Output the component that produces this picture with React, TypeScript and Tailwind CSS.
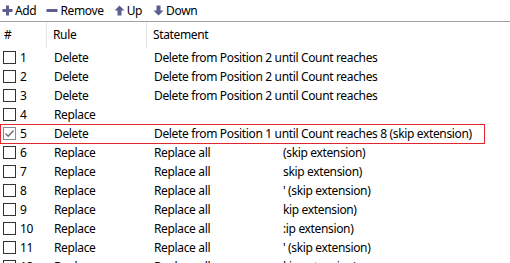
import React from "react";

type Row = { n: number; rule: string; st: string; tail?: string; checked?: boolean };

const rows: Row[] = [
  { n: 1, rule: "Delete", st: "Delete from Position 2 until Count reaches" },
  { n: 2, rule: "Delete", st: "Delete from Position 2 until Count reaches" },
  { n: 3, rule: "Delete", st: "Delete from Position 2 until Count reaches" },
  { n: 4, rule: "Replace", st: "" },
  { n: 5, rule: "Delete", st: "Delete from Position 1 until Count reaches 8 (skip extension)", checked: true },
  { n: 6, rule: "Replace", st: "Replace all", tail: "(skip extension)" },
  { n: 7, rule: "Replace", st: "Replace all", tail: "skip extension)" },
  { n: 8, rule: "Replace", st: "Replace all", tail: "' (skip extension)" },
  { n: 9, rule: "Replace", st: "Replace all", tail: "kip extension)" },
  { n: 10, rule: "Replace", st: "Replace all", tail: ":ip extension)" },
  { n: 11, rule: "Replace", st: "Replace all", tail: "' (skip extension)" },
  { n: 12, rule: "Replace", st: "Replace all", tail: "kip extension)" },
];

const iconColor = "#5e5e8e";

function Checkbox({ checked }: { checked?: boolean }) {
  return (
    <div
      className={
        "w-[13px] h-[13px] border bg-white flex items-center justify-center " +
        (checked ? "border-[#8a8a8a]" : "border-[#333333]")
      }
    >
      {checked && (
        <svg width="11" height="11" viewBox="0 0 11 11">
          <path d="M1.5 5.5 L4.2 8.2 L9.5 2.5" fill="none" stroke="#6a6a6a" strokeWidth="1.3" />
        </svg>
      )}
    </div>
  );
}

export default function App() {
  return (
    <div
      className="w-[510px] h-[263px] overflow-hidden bg-white text-[12px] tracking-[-0.35px] text-black"
      style={{ fontFamily: '"Noto Sans", "Liberation Sans", sans-serif' }}
    >
      {/* Toolbar */}
      <div className="h-[22px] border-b border-[#a0a0a0] flex items-center pl-[2px] bg-white">
        <div className="flex items-center">
          <svg width="11" height="11" viewBox="0 0 11 11" className="mr-[1px]">
            <path d="M4 0.5h3v3.5h3.5v3h-3.5v3.5h-3v-3.5h-3.5v-3h3.5z" fill={iconColor} />
          </svg>
          <span className="ml-[1px]">Add</span>
        </div>
        <div className="flex items-center ml-[10px]">
          <svg width="12" height="11" viewBox="0 0 12 11">
            <rect x="0.5" y="4" width="11" height="3" fill={iconColor} />
          </svg>
          <span className="ml-[2px]">Remove</span>
        </div>
        <div className="flex items-center ml-[10px]">
          <svg width="11" height="11" viewBox="0 0 11 11">
            <path d="M5.5 0.5 L10.5 5.5 L7.5 5.5 L7.5 10.5 L3.5 10.5 L3.5 5.5 L0.5 5.5 Z" fill={iconColor} />
          </svg>
          <span className="ml-[2px]">Up</span>
        </div>
        <div className="flex items-center ml-[11px]">
          <svg width="11" height="11" viewBox="0 0 11 11">
            <path d="M5.5 10.5 L10.5 5.5 L7.5 5.5 L7.5 0.5 L3.5 0.5 L3.5 5.5 L0.5 5.5 Z" fill={iconColor} />
          </svg>
          <span className="ml-[2px]">Down</span>
        </div>
      </div>

      {/* Header */}
      <div className="h-[26px] flex items-center">
        <div className="w-[47px] h-full flex items-center pl-[4px] border-r border-[#e5e5e5]">#</div>
        <div className="w-[100px] h-full flex items-center pl-[6px] border-r border-[#e5e5e5]">Rule</div>
        <div className="flex-1 h-full flex items-center pl-[6px]">Statement</div>
      </div>

      {/* Rows */}
      {rows.map((r) => (
        <div key={r.n} className="relative h-[19px] flex items-center whitespace-nowrap">
          {r.checked && (
            <div className="absolute left-0 top-0 w-[485px] h-[20px] border border-[#e0262f]" />
          )}
          <div className="w-[47px] flex items-center pl-[3px]">
            <Checkbox checked={r.checked} />
            <span className="ml-[4px]">{r.n}</span>
          </div>
          <div className="w-[107px] pl-[7px]">{r.rule}</div>
          <div className="flex-1 flex items-center">
            <span className="w-[129px]">{r.st}</span>
            {r.tail && <span>{r.tail}</span>}
          </div>
        </div>
      ))}
    </div>
  );
}
